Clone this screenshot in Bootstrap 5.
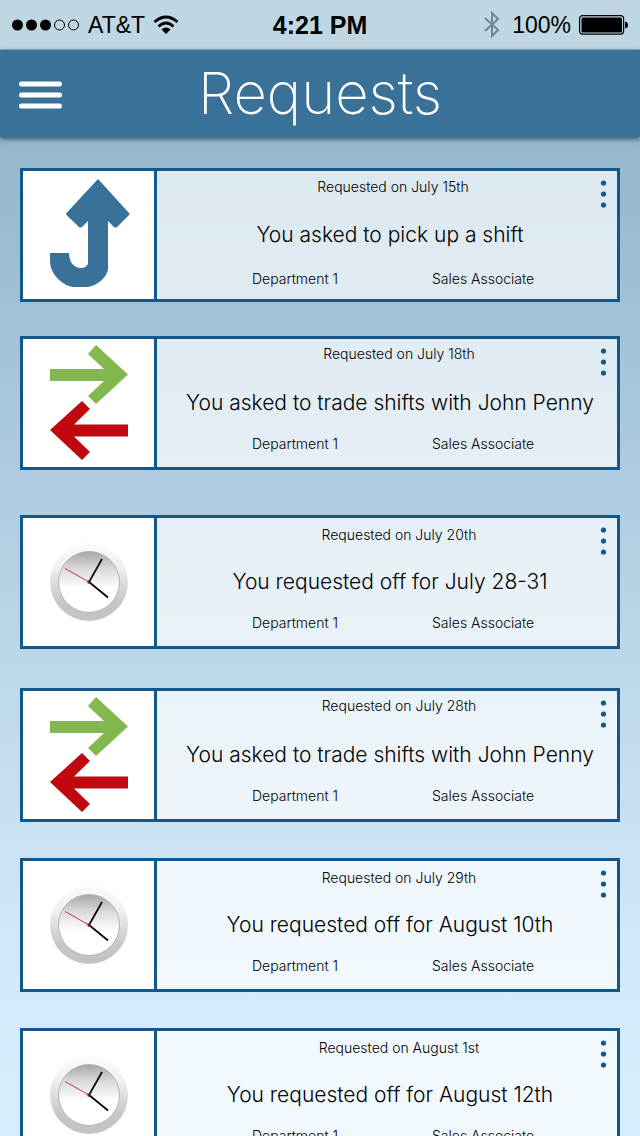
<!DOCTYPE html>
<html lang="en">
<head>
<meta charset="utf-8">
<meta name="viewport" content="width=device-width, initial-scale=1">
<title>Requests</title>
<link href="https://cdn.jsdelivr.net/npm/bootstrap@5.3.0/dist/css/bootstrap.min.css" rel="stylesheet">
<style>
  :root { --line: #13588c; --bar: #3a7199; }
  body { font-family: Inter, "Liberation Sans", sans-serif; font-weight: 300; color: #000; }
  .screen { background: linear-gradient(#8cb1c9 0, #93b7cd 12%, #bad6e8 56%, #cae2f3 74%, #d5ebfb 88%, #d5edfc 100%); }
  .status { height: 50px; background: #bfd6e3; border-bottom: 1px solid #8fb0c8; font: 400 23px/48px "Liberation Sans", sans-serif; }
  .side { flex: 1 1 0; }
  .clock-text { font-size: 25px; font-weight: 700; }
  .topbar { height: 87px; background: var(--bar); box-shadow: 0 2px 5px rgba(40, 60, 75, .8); z-index: 1; }
  .topbar h1 { font-size: 58px; line-height: 87px; font-weight: 200; }
  .menu-btn svg, .status svg, .more svg, .pic svg { display: block; }
  .feed { padding: 31px 20px 0; scrollbar-width: none; }
  .feed::-webkit-scrollbar { display: none; }
  .request { height: 134px; border: 3px solid var(--line); background: rgba(255, 255, 255, .68); }
  .gap-xs { margin-top: 34px; }
  .gap-s { margin-top: 36px; }
  .gap-m { margin-top: 39px; }
  .gap-l { margin-top: 45px; }
  .pic { width: 134px; background: #fff; border-right: 3px solid var(--line); }
  .more { top: 9px; right: 9px; }
  .date { font-size: 14px; line-height: 20px; padding: 7px 0 0 24px; }
  .what { font-size: 21px; line-height: 30px; margin-top: 22px; padding-left: 6px; white-space: nowrap; }
  .where { font-size: 14px; line-height: 20px; margin-top: 16px; padding-left: 95px; }
  .where span { width: 180px; white-space: nowrap; }
  .pickup .date { padding: 6px 0 0 12px; }
  .pickup .what { margin-top: 23px; }
  .pickup .where { margin-top: 19px; }
  .trade .date { padding-top: 5px; }
  .trade .what { margin-top: 24px; }
</style>
</head>
<body>
<svg width="0" height="0" class="position-absolute" aria-hidden="true">
  <defs>
    <linearGradient id="rim" x1="0" y1="0" x2="0" y2="1"><stop offset="0" stop-color="#fbfbfc"/><stop offset=".3" stop-color="#f0f0f2"/><stop offset=".75" stop-color="#c6c7ca"/><stop offset="1" stop-color="#c2c3c6"/></linearGradient>
    <linearGradient id="face" x1="0" y1="0" x2="0" y2="1"><stop offset="0" stop-color="#a6a6a6"/><stop offset=".28" stop-color="#dadada"/><stop offset=".6" stop-color="#fff"/></linearGradient>
  </defs>
  <symbol id="pickup" viewBox="0 0 131 128">
    <path d="M75.500 8.500L106 42Q107 43 106 44L94 56Q92.500 57 91 56L85 50V97C85 106 73 116 63 116H50C38 114 27 102 27 90V82H46C46 91 51 97 58 97C61 97 63 96 65 93V50L59 56Q57.500 57 56 56L43.500 44Q42.500 43 43.500 42L74.500 8.500Q75 8 75.500 8.500Z" fill="#3a7199"/>
  </symbol>
  <symbol id="trade" viewBox="0 0 131 128">
    <path d="M27 30H81L65 15L73 6L105 35.500L73 65L65 57L81 42H27Z" fill="#82b84f"/>
    <path d="M105 85.500V97.500H51L67 113L59 121L27 91L59 62L67 70L51 85.500Z" fill="#c00811"/>
  </symbol>
  <symbol id="timeoff" viewBox="0 0 131 128">
    <circle cx="66" cy="64" r="39" fill="url(#rim)"/>
    <circle cx="66" cy="64" r="30.500" fill="url(#face)" stroke="#b3b4b6"/>
    <path d="M66 64L42 50.500" stroke="#cf3439"/>
    <path d="M79 41L66 64L85 79.500" fill="none" stroke="#000" stroke-width="1.700"/>
    <circle cx="66" cy="64" r="1.700" fill="#7b1218"/>
  </symbol>
  <symbol id="dots" viewBox="0 0 8 28"><g fill="#13588c"><circle cx="3.500" cy="3" r="2.600"/><circle cx="3.500" cy="14" r="2.600"/><circle cx="3.500" cy="25" r="2.600"/></g></symbol>
</svg>

<div class="screen vh-100 d-flex flex-column overflow-hidden">
  <div class="status d-flex align-items-center flex-shrink-0 px-2">
    <div class="side d-flex align-items-center gap-2 ps-1">
      <svg width="68" height="12" viewBox="0 0 68 12" aria-label="Signal"><circle cx="5.500" cy="6" r="5.500"/><circle cx="19.500" cy="6" r="5.500"/><circle cx="33.500" cy="6" r="5.500"/><g fill="none" stroke="#000"><circle cx="47.500" cy="6" r="5"/><circle cx="61.500" cy="6" r="5"/></g></svg>
      <span>AT&amp;T</span>
      <svg width="26" height="20" viewBox="0 0 26 20" aria-label="Wi-Fi"><path d="M1.500 7Q13-3 24.500 7M5.500 11.500Q13 4.500 20.500 11.500" fill="none" stroke="#000" stroke-width="2.800"/><path d="M8.500 14.500Q13 10.500 17.500 14.500L13 19Z"/></svg>
    </div>
    <div class="clock-text">4:21 PM</div>
    <div class="side d-flex align-items-center justify-content-end gap-2 pe-1">
      <svg class="me-1" width="16" height="28" viewBox="0 0 16 28" aria-label="Bluetooth"><path d="M1 7L14 19L8 25V2L14 8L1 20" fill="none" stroke="#74868f" stroke-width="2"/></svg>
      <span>100%</span>
      <svg width="49" height="20" viewBox="0 0 49 20" aria-label="Battery"><rect x=".6" y=".6" width="44" height="18.500" rx="3" fill="none" stroke="#000" stroke-width="1.200"/><rect x="2.500" y="2.500" width="40.500" height="15" rx="1.500"/><path d="M46 6.500Q49 7 49 10T46 13.500Z"/></svg>
    </div>
  </div>

  <header class="topbar position-relative d-flex align-items-center flex-shrink-0 text-white">
    <div class="side">
      <button type="button" class="menu-btn btn border-0 p-0 ms-3" aria-label="Menu">
        <svg width="50" height="32" viewBox="0 0 50 32"><path d="M5.500 6H43.500M5.500 17H43.500M5.500 28H43.500" stroke="#fff" stroke-width="5" stroke-linecap="round"/></svg>
      </button>
    </div>
    <h1 class="m-0">Requests</h1>
    <div class="side"></div>
  </header>

  <main class="feed flex-grow-1 overflow-auto">
    <article class="request pickup d-flex position-relative">
      <div class="pic flex-shrink-0"><svg width="131" height="128"><use href="#pickup"/></svg></div>
      <div class="flex-grow-1 text-center">
        <div class="date">Requested on July 15th</div>
        <div class="what">You asked to pick up a shift</div>
        <div class="where d-flex text-start"><span>Department 1</span><span>Sales Associate</span></div>
      </div>
      <button type="button" class="more btn border-0 p-0 position-absolute" aria-label="Options"><svg width="8" height="28"><use href="#dots"/></svg></button>
    </article>
    <article class="request trade gap-xs d-flex position-relative">
      <div class="pic flex-shrink-0"><svg width="131" height="128"><use href="#trade"/></svg></div>
      <div class="flex-grow-1 text-center">
        <div class="date">Requested on July 18th</div>
        <div class="what">You asked to trade shifts with John Penny</div>
        <div class="where d-flex text-start"><span>Department 1</span><span>Sales Associate</span></div>
      </div>
      <button type="button" class="more btn border-0 p-0 position-absolute" aria-label="Options"><svg width="8" height="28"><use href="#dots"/></svg></button>
    </article>
    <article class="request gap-l d-flex position-relative">
      <div class="pic flex-shrink-0"><svg width="131" height="128"><use href="#timeoff"/></svg></div>
      <div class="flex-grow-1 text-center">
        <div class="date">Requested on July 20th</div>
        <div class="what">You requested off for July 28-31</div>
        <div class="where d-flex text-start"><span>Department 1</span><span>Sales Associate</span></div>
      </div>
      <button type="button" class="more btn border-0 p-0 position-absolute" aria-label="Options"><svg width="8" height="28"><use href="#dots"/></svg></button>
    </article>
    <article class="request trade gap-m d-flex position-relative">
      <div class="pic flex-shrink-0"><svg width="131" height="128"><use href="#trade"/></svg></div>
      <div class="flex-grow-1 text-center">
        <div class="date">Requested on July 28th</div>
        <div class="what">You asked to trade shifts with John Penny</div>
        <div class="where d-flex text-start"><span>Department 1</span><span>Sales Associate</span></div>
      </div>
      <button type="button" class="more btn border-0 p-0 position-absolute" aria-label="Options"><svg width="8" height="28"><use href="#dots"/></svg></button>
    </article>
    <article class="request gap-s d-flex position-relative">
      <div class="pic flex-shrink-0"><svg width="131" height="128"><use href="#timeoff"/></svg></div>
      <div class="flex-grow-1 text-center">
        <div class="date">Requested on July 29th</div>
        <div class="what">You requested off for August 10th</div>
        <div class="where d-flex text-start"><span>Department 1</span><span>Sales Associate</span></div>
      </div>
      <button type="button" class="more btn border-0 p-0 position-absolute" aria-label="Options"><svg width="8" height="28"><use href="#dots"/></svg></button>
    </article>
    <article class="request gap-s d-flex position-relative">
      <div class="pic flex-shrink-0"><svg width="131" height="128"><use href="#timeoff"/></svg></div>
      <div class="flex-grow-1 text-center">
        <div class="date">Requested on August 1st</div>
        <div class="what">You requested off for August 12th</div>
        <div class="where d-flex text-start"><span>Department 1</span><span>Sales Associate</span></div>
      </div>
      <button type="button" class="more btn border-0 p-0 position-absolute" aria-label="Options"><svg width="8" height="28"><use href="#dots"/></svg></button>
    </article>
  </main>
</div>
<script src="https://cdn.jsdelivr.net/npm/bootstrap@5.3.0/dist/js/bootstrap.bundle.min.js"></script>
</body>
</html>
